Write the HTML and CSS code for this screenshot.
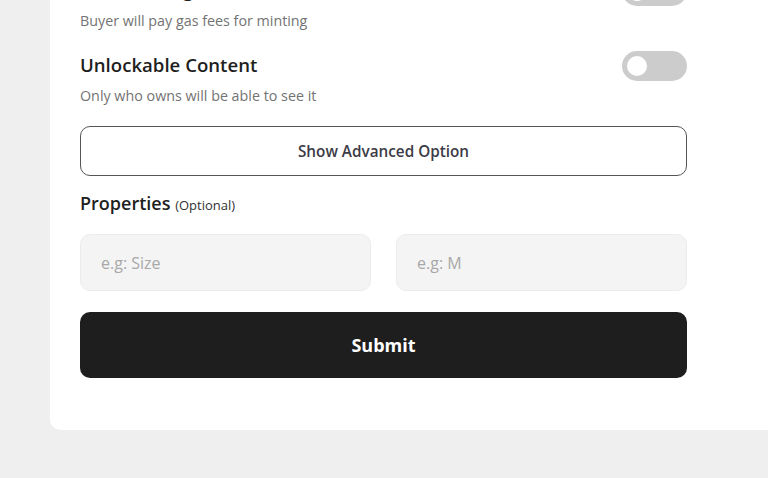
FILE: index.html
```html
<!DOCTYPE html>
<html>
<head>
<meta charset="utf-8">
<link rel="stylesheet" href="styles.css">
</head>
<body>
<div class="page">
  <div class="card">
    <div class="option">
      <div class="option-text">
        <div class="option-title">Free Minting</div>
        <div class="option-desc">Buyer will pay gas fees for minting</div>
      </div>
      <span class="toggle"><span class="knob"></span></span>
    </div>
    <div class="option option-last">
      <div class="option-text">
        <div class="option-title">Unlockable Content</div>
        <div class="option-desc">Only who owns will be able to see it</div>
      </div>
      <span class="toggle"><span class="knob"></span></span>
    </div>
    <button class="advanced">Show Advanced Option</button>
    <div class="props-title">Properties <span class="optional">(Optional)</span></div>
    <div class="props">
      <input class="field" type="text" placeholder="e.g: Size">
      <input class="field" type="text" placeholder="e.g: M">
    </div>
    <button class="submit">Submit</button>
  </div>
</div>
</body>
</html>
```
FILE: styles.css
```css
* { box-sizing: border-box; }
html, body { margin: 0; padding: 0; }
body {
  background: #efefef;
  font-family: "Open Sans", "Noto Sans", sans-serif;
  width: 768px;
  height: 478px;
  overflow: hidden;
}
.page {
  padding-left: 50px;
}
.card {
  background: #ffffff;
  margin-top: -52px;
  padding: 30px 81px 52px 30px;
  border-radius: 0 0 0 10px;
  display: flex;
  flex-direction: column;
}
.option {
  display: flex;
  justify-content: space-between;
  align-items: flex-start;
  margin-bottom: 22px;
}
.option-last { margin-bottom: 20px; }
.option-title {
  font-size: 18.6px;
  line-height: 24px;
  font-weight: 600;
  color: #1e1e1e;
}
.option-desc {
  margin-top: 9px;
  font-size: 14.3px;
  line-height: 20px;
  color: #737373;
}
.toggle {
  width: 65px;
  height: 30px;
  border-radius: 15px;
  background: #cccccc;
  margin-top: -2px;
  display: flex;
  align-items: center;
  padding-left: 5px;
}
.knob {
  width: 20px;
  height: 20px;
  border-radius: 50%;
  background: #ffffff;
}
.advanced {
  height: 50px;
  border: 1px solid #555555;
  border-radius: 10px;
  background: #ffffff;
  font-family: inherit;
  font-size: 15.3px;
  font-weight: 600;
  color: #3c3c46;
  margin-bottom: 15px;
}
.props-title {
  font-size: 18px;
  line-height: 24px;
  font-weight: 600;
  color: #1e1e1e;
  margin-bottom: 17px;
}
.optional {
  font-size: 13px;
  font-weight: 400;
  color: #333333;
}
.props {
  display: flex;
  gap: 25px;
  margin-bottom: 21px;
}
.field {
  flex: 1;
  min-width: 0;
  height: 57px;
  border: 1px solid #ececec;
  border-radius: 10px;
  background: #f4f4f4;
  padding: 0 20px;
  font-family: inherit;
  font-size: 16px;
  color: #333;
  outline: none;
}
.field::placeholder { color: #a8a8a8; }
.submit {
  height: 66px;
  border: none;
  border-radius: 10px;
  background: #1e1e1e;
  color: #ffffff;
  font-family: inherit;
  font-size: 18px;
  font-weight: 700;
}
```
